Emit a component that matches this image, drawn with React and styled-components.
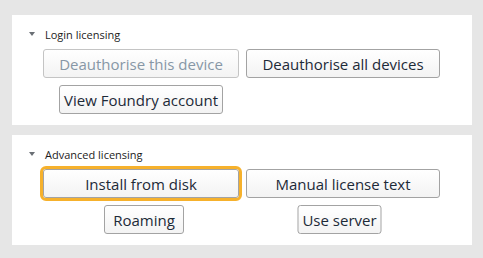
import React from 'react'
import styled, { createGlobalStyle } from 'styled-components'

const GlobalStyle = createGlobalStyle`
  html, body {
    margin: 0;
    padding: 0;
    background: #e6e6e6;
  }
  body {
    font-family: "Open Sans", "Noto Sans", sans-serif;
  }
`

const Page = styled.div`
  width: 483px;
  height: 258px;
  box-sizing: border-box;
  padding: 15px 11px 0 12px;
  display: flex;
  flex-direction: column;
  gap: 10px;
`

const Panel = styled.section`
  background: #fff;
  height: 110px;
  box-sizing: border-box;
  padding: 11px 0 0 17px;
`

const Header = styled.div`
  display: flex;
  align-items: center;
  gap: 10px;
  height: 16px;
  font-size: 11px;
  color: #1c1c1c;
`

const Arrow = styled.span`
  width: 0;
  height: 0;
  border-left: 3.5px solid transparent;
  border-right: 3.5px solid transparent;
  border-top: 4px solid #6a6f75;
  margin-top: -1px;
`

const Grid = styled.div`
  display: grid;
  grid-template-columns: 196px 194px;
  column-gap: 7px;
  row-gap: 7px;
  margin: 7px 0 0 14px;
`

const Cell = styled.div`
  display: flex;
  justify-content: center;
  transform: translateX(${p => p.$shift || 0}px);
`

const Button = styled.button`
  height: 29px;
  min-width: 80px;
  width: ${p => (p.$wide ? '100%' : 'auto')};
  box-sizing: border-box;
  padding: 0 4px;
  font-family: inherit;
  font-size: 15px;
  color: ${p => (p.disabled ? '#8797a6' : '#1d2a38')};
  background: linear-gradient(#ffffff, #f3f3f3);
  border: 1px solid ${p => (p.disabled ? '#c4c4c4' : '#a3a3a3')};
  border-radius: 3px;
  outline: ${p => (p.$focus ? '3px solid #f6b12c' : 'none')};
  outline-offset: 0;
`

const App = () => (
  <>
    <GlobalStyle />
    <Page>
      <Panel>
        <Header>
          <Arrow />
          Login licensing
        </Header>
        <Grid>
          <Button $wide disabled>Deauthorise this device</Button>
          <Button $wide>Deauthorise all devices</Button>
          <Cell>
            <Button>View Foundry account</Button>
          </Cell>
        </Grid>
      </Panel>
      <Panel>
        <Header>
          <Arrow />
          Advanced licensing
        </Header>
        <Grid>
          <Button $wide $focus>Install from disk</Button>
          <Button $wide>Manual license text</Button>
          <Cell $shift={3}>
            <Button>Roaming</Button>
          </Cell>
          <Cell $shift={-3.5}>
            <Button>Use server</Button>
          </Cell>
        </Grid>
      </Panel>
    </Page>
  </>
)

export default App
